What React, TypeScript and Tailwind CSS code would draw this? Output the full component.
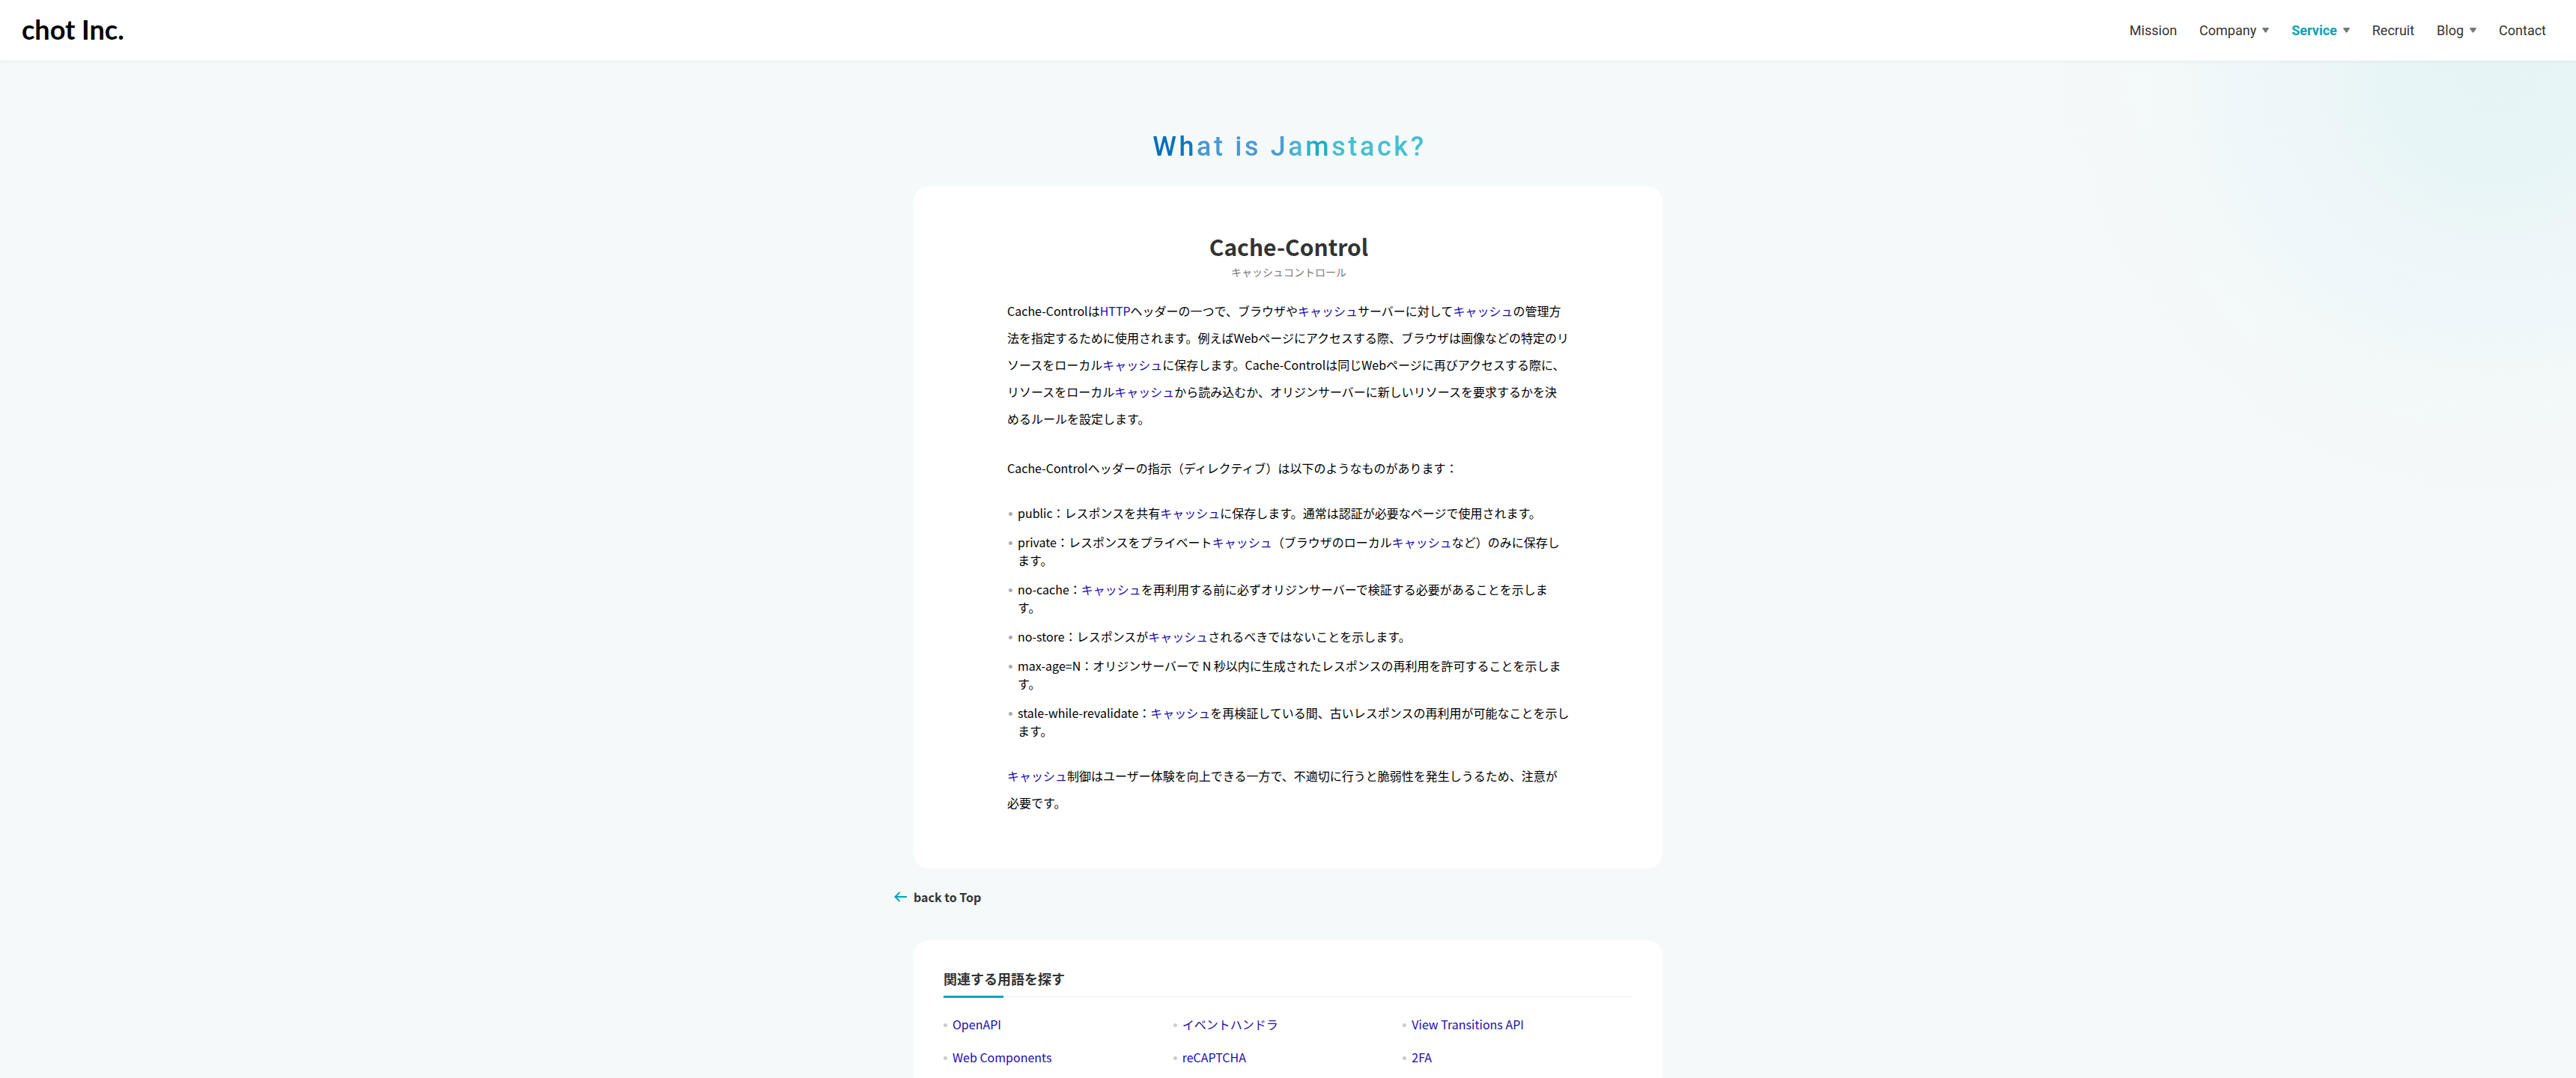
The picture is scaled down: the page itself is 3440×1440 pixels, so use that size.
import type { ReactNode } from "react";

type NavItem = { label: string; menu?: boolean; active?: boolean };

const NAV: NavItem[] = [
  { label: "Mission" },
  { label: "Company", menu: true },
  { label: "Service", menu: true, active: true },
  { label: "Recruit" },
  { label: "Blog", menu: true },
  { label: "Contact" },
];

const TERMS = ["OpenAPI", "イベントハンドラ", "View Transitions API", "Web Components", "reCAPTCHA", "2FA"];

function Term({ children }: { children: ReactNode }) {
  return (
    <a href="#term" className="text-[#1a0dab]">
      {children}
    </a>
  );
}

const cache = <Term>キャッシュ</Term>;

const DIRECTIVES: ReactNode[] = [
  <>public：レスポンスを共有{cache}に保存します。通常は認証が必要なページで使用されます。</>,
  <>private：レスポンスをプライベート{cache}（ブラウザのローカル{cache}など）のみに保存します。</>,
  <>no-cache：{cache}を再利用する前に必ずオリジンサーバーで検証する必要があることを示します。</>,
  <>no-store：レスポンスが{cache}されるべきではないことを示します。</>,
  <>max-age=N：オリジンサーバーで N 秒以内に生成されたレスポンスの再利用を許可することを示します。</>,
  <>stale-while-revalidate：{cache}を再検証している間、古いレスポンスの再利用が可能なことを示します。</>,
];

function Header() {
  return (
    <header className="relative flex h-[81px] items-center justify-between bg-white pr-10 pl-[29px] shadow-[0_0_6px_rgba(0,0,0,0.08)]">
      <a href="#home" className="pb-1 font-['Lato'] text-[36px] leading-9 font-bold text-black">
        chot Inc.
      </a>
      <nav className="flex items-center gap-[30px] font-['Roboto'] text-[18px] leading-6 text-[#333333]">
        {NAV.map((item) => (
          <a
            key={item.label}
            href={`#${item.label.toLowerCase()}`}
            className={item.active ? "flex items-center gap-2 font-bold text-[#00a3b8]" : "flex items-center gap-2"}
          >
            {item.label}
            {item.menu && (
              <svg width="9" height="7" viewBox="0 0 9 7" aria-hidden="true">
                <path d="M1 0h7q1.300 0 .7 1.200L5.500 5.900q-1 1.100-2 0L.3 1.200Q-.3 0 1 0z" fill="#777777" />
              </svg>
            )}
          </a>
        ))}
      </nav>
    </header>
  );
}

function Article() {
  return (
    <article className="rounded-[20px] bg-white pt-[60px] pr-[123px] pb-[70px] pl-[125px]">
      <h2 className="text-center text-[30px] leading-10 font-bold text-[#333333]">Cache-Control</h2>
      <p className="pt-0.5 text-center text-[14px] leading-6 text-[#777777]">キャッシュコントロール</p>
      <div className="mt-[22px] flex flex-col gap-[30px] text-[16px] leading-9 text-black">
        <p>
          Cache-Controlは<Term>HTTP</Term>ヘッダーの一つで、ブラウザや{cache}サーバーに対して{cache}
          の管理方法を指定するために使用されます。例えばWebページにアクセスする際、ブラウザは画像などの特定のリソースをローカル{cache}
          に保存します。Cache-Controlは同じWebページに再びアクセスする際に、リソースをローカル{cache}
          から読み込むか、オリジンサーバーに新しいリソースを要求するかを決
          <span className="whitespace-nowrap">める</span>
          ルールを設定します。
        </p>
        <p>Cache-Controlヘッダーの指示（ディレクティブ）は以下のようなものがあります：</p>
        <ul className="flex flex-col gap-[15px] leading-6">
          {DIRECTIVES.map((text, i) => (
            <li key={i} className="flex gap-[7px] pl-0.5">
              <span className="mt-[11px] size-[5px] shrink-0 rounded-full bg-[#aaaaaa]" />
              <span>{text}</span>
            </li>
          ))}
        </ul>
        <p>
          {cache}制御はユーザー体験を向上できる一方で、不適切に行うと脆弱性を発生しうるため、注意が
          <span className="whitespace-nowrap">必要</span>
          です。
        </p>
      </div>
    </article>
  );
}

function RelatedTerms() {
  return (
    <section className="grow rounded-t-[20px] bg-white px-10 pt-[38px] pb-3">
      <div className="border-b border-[#eeeeee]">
        <h2 className="text-[18px] leading-[26px] font-bold text-[#333333]">関連する用語を探す</h2>
        <div className="mt-[10px] -mb-0.5 h-[3px] w-20 bg-[#00a3b8]" />
      </div>
      <ul className="mt-6 grid grid-cols-3 gap-y-5 text-[16px] leading-6">
        {TERMS.map((term) => (
          <li key={term} className="flex gap-[7px]">
            <span className="mt-[11px] size-[5px] shrink-0 rounded-full bg-[#cccccc]" />
            <Term>{term}</Term>
          </li>
        ))}
      </ul>
    </section>
  );
}

export default function App() {
  return (
    <div className="flex min-h-screen flex-col bg-[#f5f9fa] bg-[radial-gradient(circle_at_calc(100%_-_110px)_90px,#e6f4f5_0px,#e8f5f6_150px,#edf6f8_240px,#eff7fa_350px,#f3f9f8_430px,#f4f8f9_520px,#f5f9fa_600px)] font-['Noto_Sans_CJK_JP',sans-serif]">
      <Header />
      <main className="mx-auto flex w-full max-w-[1000px] grow flex-col">
        <h1 className="mx-auto mt-[91px] bg-[linear-gradient(90deg,#006db8_0%,#0a78c2_15%,#4a97d2_18%,#4a9dd4_48%,#4bb8d0_54%,#10a8c0_62%,#45bfcf_67%,#45bfcf_100%)] bg-clip-text pl-1 font-['Roboto'] text-[36px] leading-12 font-medium tracking-widest text-transparent">
          What is Jamstack?
        </h1>
        <div className="mt-[29px]">
          <Article />
        </div>
        <a href="#top" className="mt-[26px] -ml-[26px] flex h-6 items-center gap-2 self-start text-[16px] leading-6 font-bold text-[#333333]">
          <svg width="18" height="14" viewBox="0 0 18 14" fill="none" stroke="#00a3b8" strokeWidth="2" aria-hidden="true">
            <path d="M17 7H2M7.500 1L1.500 7l6 6" />
          </svg>
          back to Top
        </a>
        <div className="mt-[46px] flex grow flex-col">
          <RelatedTerms />
        </div>
      </main>
    </div>
  );
}
